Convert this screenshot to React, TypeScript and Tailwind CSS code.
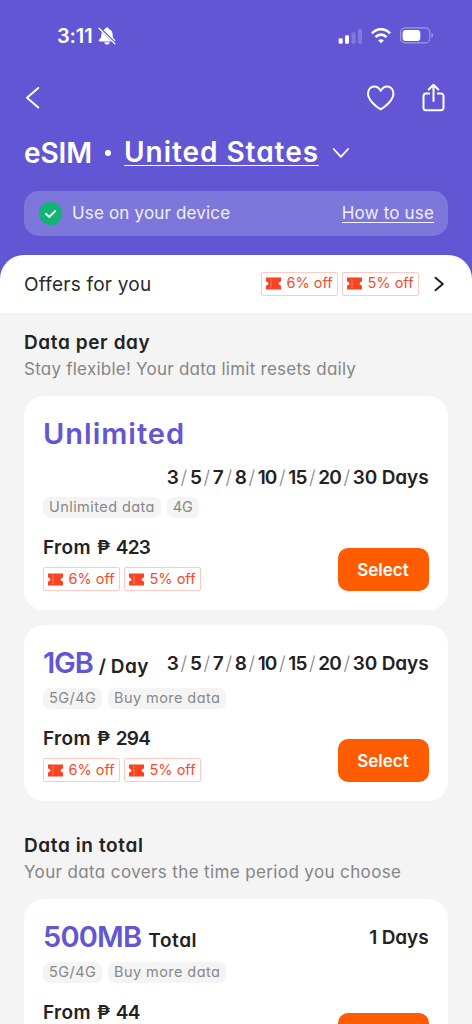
import type { ReactNode } from 'react';

function StatusBar() {
  return (
    <div className="flex h-[71px] items-center pr-[38px] pl-[57px]">
      <span className="text-[20px] leading-6 font-semibold tracking-[-0.006em]">3:11</span>
      <svg className="ml-[5px] h-[18px] w-[18px]" viewBox="0 0 18 18" fill="none">
        <path d="M9 .5c-1 0-1.800.6-2 1.500C4.500 2.900 3.400 5 3.400 7.300c0 3.200-.9 4.300-2.200 5.300-.9.800-.6 1.900.5 1.900h14.600c1.100 0 1.400-1.100.5-1.900-1.300-1-2.200-2.100-2.200-5.300 0-2.300-1.200-4.400-3.700-5.300C10.700 1.100 10 .5 9 .5Z" fill="white" />
        <path d="M6.300 15.200h5.400c-.2 1.500-1.200 2.300-2.700 2.300s-2.500-.8-2.700-2.300Z" fill="white" />
        <path d="m1.500.9 16 16" stroke="#6356d4" strokeWidth="2.600" />
        <path d="m1 1.200 15.800 15.600" stroke="white" strokeWidth="1.300" strokeLinecap="round" />
      </svg>
      <svg className="ml-auto h-[18px] w-[26px]" viewBox="0 0 26 18" fill="white">
        <rect x="0.700" y="11.200" width="4" height="5.600" rx="1.200" />
        <rect x="7" y="8.200" width="4" height="8.600" rx="1.200" />
        <rect x="13.500" y="5.200" width="4" height="11.600" rx="1.200" opacity=".2" />
        <rect x="20" y="1.800" width="4" height="15" rx="1.200" opacity=".2" />
      </svg>
      <svg className="ml-[7px] h-[16px] w-[20px]" viewBox="0 0 20 16" fill="none" stroke="white" strokeWidth="2.700">
        <path d="M.9 5.400C6-.2 14-.2 19.100 5.400" />
        <path d="M4.500 9.100c3.100-3.200 7.900-3.200 11 0" />
        <path d="M10 15.300 7.200 12.500c1.500-1.700 4.100-1.700 5.600 0Z" fill="white" stroke="none" />
      </svg>
      <svg className="ml-[9px] h-[17px] w-[34px]" viewBox="0 0 34 17" fill="none">
        <rect x=".6" y=".9" width="29.200" height="15" rx="4.500" stroke="white" strokeOpacity=".4" strokeWidth="1.100" />
        <rect x="2.600" y="2.900" width="17.700" height="11" rx="3" fill="white" />
        <path d="M31.500 6v5c1.800-.7 1.800-4.300 0-5Z" fill="white" fillOpacity=".45" />
      </svg>
    </div>
  );
}

function Toolbar() {
  return (
    <div className="flex h-[54px] items-center pr-[25px] pl-[24px]">
      <svg className="h-6 w-[18px]" viewBox="0 0 18 24" fill="none" stroke="white" strokeWidth="2" strokeLinecap="round" strokeLinejoin="round">
        <path d="M14.300 2 3 11.800l11.300 9.700" />
      </svg>
      <svg className="ml-auto h-[28px] w-[30px]" viewBox="0 0 30 28" fill="none" stroke="white" strokeWidth="2" strokeLinejoin="round">
        <path d="M14.700 25.300C10.200 22.700 2 16.300 2 9.600 2 5.300 4.800 2.400 8.300 2.400c2.700 0 4.800 1.400 6.400 4.500 1.600-3.100 3.700-4.500 6.400-4.500 3.500 0 6.300 2.900 6.300 7.200 0 6.700-8.200 13.100-12.700 15.700Z" />
      </svg>
      <svg className="ml-[24px] h-[30px] w-[27px]" viewBox="0 0 27 30" fill="none" stroke="white" strokeWidth="2" strokeLinecap="round" strokeLinejoin="round">
        <path d="M9.200 10.500H6A2.500 2.500 0 0 0 3.500 13v11.700A2.500 2.500 0 0 0 6 27.200h15a2.500 2.500 0 0 0 2.500-2.500V13a2.500 2.500 0 0 0-2.500-2.500h-3.200" />
        <path d="M13.500 18V2M8.700 6.500l4.800-4.700 4.800 4.700" />
      </svg>
    </div>
  );
}

function Coupon({ label }: { label: string }) {
  return (
    <span className="flex h-6 w-[77px] items-center rounded-[2px] border border-[#ffc9bf] bg-white pl-[4px] text-[14.500px] leading-none whitespace-nowrap text-[#fa4a2c]">
      <svg className="mr-[5.500px] h-[13px] w-[15px] shrink-0" viewBox="0 0 15 13" fill="none">
        <path d="M0 .4h15v3.700l-.8.800a1.600 1.600 0 0 0 0 3.200l.8.800v3.700H0V8.900l.8-.8a1.600 1.600 0 0 0 0-3.200L0 4.100Z" fill="#fa4320" />
        <path d="M5 2.300v8.800" stroke="white" strokeOpacity=".6" strokeWidth=".9" strokeDasharray="1.500 1" />
      </svg>
      {label}
    </span>
  );
}

function Coupons() {
  return (
    <div className="flex gap-1">
      <Coupon label="6% off" />
      <Coupon label="5% off" />
    </div>
  );
}

function Heading({ title, text, track }: { title: string; text: string; track: string }) {
  return (
    <div className="px-6 whitespace-nowrap">
      <h2 className="h-6 text-[19px] leading-[26px] font-semibold tracking-[0.032em] text-[#222]">{title}</h2>
      <p className={`mt-[2px] h-6 text-[17px] leading-[26px] text-[#858585] ${track}`}>{text}</p>
    </div>
  );
}

function Days({ values }: { values: string[] }) {
  return (
    <div className="flex h-6 items-center text-[19px] leading-6 font-semibold whitespace-nowrap text-[#222]">
      {values.map((v, i) => (
        <span key={v} className="flex">
          {i > 0 && <span className="w-[11.900px] text-center font-light text-[#888]">/</span>}
          <span className={i === values.length - 1 ? 'tracking-[-0.006em]' : 'tracking-[-0.050em]'}>{v}</span>
        </span>
      ))}
    </div>
  );
}

function Tag({ label }: { label: string }) {
  return (
    <span className={`flex h-[21px] items-center rounded-[7px] bg-[#f4f4f4] px-[6px] text-[14.500px] leading-none whitespace-nowrap text-[#888] ${label === '4G' ? '' : 'tracking-[0.030em]'}`}>
      {label}
    </span>
  );
}

function Purchase({ tags, price, children, action }: { tags: string[]; price: string; children?: ReactNode; action?: string }) {
  return (
    <>
      <div className="flex gap-[5.800px]">
        {tags.map((t) => <Tag key={t} label={t} />)}
      </div>
      <div className="mt-[17.500px] flex justify-between">
        <div>
          <div className="flex h-6 gap-[6px] text-[19px] leading-[26px] font-semibold text-[#222]">
            <span className="tracking-[0.019em]">From</span>
            <span>₱</span>
            <span className="-ml-[0.500px] tracking-[-0.040em]">{price}</span>
          </div>
          {children && <div className="mt-2">{children}</div>}
        </div>
        <button className="mt-[12.500px] h-[43.500px] w-[91px] rounded-[10px] bg-[#ff5c00] pt-[1.500px] text-[17px] leading-[18px] font-semibold text-white">{action}</button>
      </div>
    </>
  );
}

function Card({ children }: { children: ReactNode }) {
  return <section className="mx-6 rounded-[20px] bg-white pt-[19.500px] pr-[19.500px] pb-[19px] pl-[19px]">{children}</section>;
}

const allDays = ['3', '5', '7', '8', '10', '15', '20', '30 Days'];

export default function App() {
  return (
    <main className="h-[1024px] w-[472px] overflow-hidden bg-[#f4f4f4] font-['Inter',sans-serif] [font-feature-settings:'cv11']">
      <header className="h-[312.500px] bg-[#6356d4] text-white">
        <StatusBar />
        <Toolbar />
        <h1 className="flex h-[54px] items-center pl-6 text-[28px] leading-8 font-semibold whitespace-nowrap">
          <span className="pt-px tracking-[-0.003em]">eSIM</span>
          <span className="mt-px ml-[13px] h-[6px] w-[6px] rounded-full bg-white" />
          <span className="mt-[0.500px] ml-[13px] h-[28px] w-[195px] border-b-[1.500px] border-white leading-[29px] tracking-[0.034em]">United States</span>
          <svg className="mt-[2px] ml-[13px] h-[12px] w-[18px]" viewBox="0 0 18 12" fill="none" stroke="white" strokeWidth="1.800" strokeLinecap="round" strokeLinejoin="round">
            <path d="m1.700 2 7.200 7.800L16.100 2" />
          </svg>
        </h1>
        <div className="mx-6 mt-[12px] flex h-[44.500px] items-center rounded-[15px] bg-[#7d76db] pr-[14px] pl-[15px] text-[17px] leading-6 whitespace-nowrap text-[#f1f0fd]">
          <svg className="h-[23px] w-[23px]" viewBox="0 0 23 23" fill="none">
            <circle cx="11.500" cy="11.500" r="11.500" fill="#0fb572" />
            <path d="m6.900 11.700 3.400 3.200 5.800-5.800" stroke="white" strokeWidth="2" strokeLinecap="round" strokeLinejoin="round" />
          </svg>
          <span className="ml-[10px] tracking-[0.010em]">Use on your device</span>
          <span className="ml-auto h-[19px] border-b border-[#f1f0fd] leading-[18px] tracking-[0.010em]">How to use</span>
        </div>
        <div className="mt-[19px] flex h-[58px] items-center rounded-t-[24px] bg-white pr-[27px] pl-6 text-[#2a2a2a]">
          <span className="pt-[2px] text-[19px] leading-6 tracking-[0.012em] whitespace-nowrap">Offers for you</span>
          <div className="ml-auto"><Coupons /></div>
          <svg className="ml-[14px] h-[18px] w-[12px]" viewBox="0 0 12 18" fill="none" stroke="#222" strokeWidth="2" strokeLinecap="round" strokeLinejoin="round">
            <path d="m2.500 2.700 7.300 6.300-7.300 6.300" />
          </svg>
        </div>
      </header>

      <div className="pt-[17.500px]">
        <Heading title="Data per day" text="Stay flexible! Your data limit resets daily" track="tracking-[0.014em]" />
      </div>
      <div className="mt-[15.500px] flex flex-col gap-[14.500px]">
        <Card>
          <div className="h-9 text-[29px] leading-[38px] font-semibold tracking-[0.034em] text-[#6356d4]">Unlimited</div>
          <div className="mt-[15px] mb-[6.500px] flex justify-end"><Days values={allDays} /></div>
          <Purchase tags={['Unlimited data', '4G']} price="423" action="Select"><Coupons /></Purchase>
        </Card>
        <Card>
          <div className="mb-[7.500px] flex h-9 items-start justify-between">
            <div className="flex items-baseline text-[29px] leading-[38px] font-semibold text-[#222]">
              <span className="tracking-[-0.040em] text-[#6356d4]">1GB</span>
              <span className="ml-[6px] text-[19px] leading-6">/</span>
              <span className="ml-[5px] text-[19px] leading-6 tracking-[0.025em]">Day</span>
            </div>
            <div className="pt-[8px]"><Days values={allDays} /></div>
          </div>
          <Purchase tags={['5G/4G', 'Buy more data']} price="294" action="Select"><Coupons /></Purchase>
        </Card>
      </div>
      <div className="pt-8">
        <Heading title="Data in total" text="Your data covers the time period you choose" track="tracking-[0.022em]" />
      </div>
      <div className="mt-[15.500px]">
        <Card>
          <div className="mb-[7.500px] flex h-9 items-start justify-between">
            <div className="flex items-baseline text-[29px] leading-[37px] font-semibold text-[#222]">
              <span className="tracking-[-0.028em] text-[#6356d4]">500MB</span>
              <span className="ml-[7px] text-[19px] leading-6 tracking-[0.030em]">Total</span>
            </div>
            <div className="pt-[8px]"><Days values={['1 Days']} /></div>
          </div>
          <Purchase tags={['5G/4G', 'Buy more data']} price="44" />
        </Card>
      </div>
    </main>
  );
}
